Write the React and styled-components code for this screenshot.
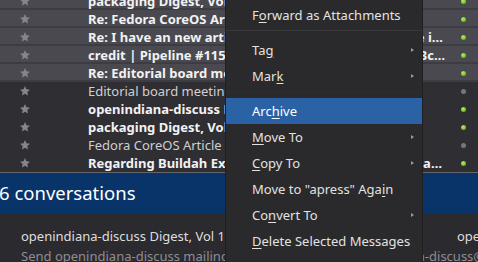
import React from 'react';
import styled, { createGlobalStyle } from 'styled-components';

const GlobalStyle = createGlobalStyle`
  html, body {
    margin: 0;
    padding: 0;
    background: #2b2a2f;
  }
  body {
    font-family: 'Noto Sans', 'Open Sans', sans-serif;
  }
`;

const Screen = styled.div`
  position: relative;
  width: 478px;
  height: 262px;
  overflow: hidden;
  background: #2b2a2f;
  font-family: 'Noto Sans', 'Open Sans', sans-serif;
`;

const MessageList = styled.div`
  display: flex;
  flex-direction: column;
  margin-top: -8px;
`;

const Row = styled.div`
  display: grid;
  grid-template-columns: 48px 40px 359px 1fr;
  align-items: center;
  height: 18px;
  box-sizing: border-box;
  background: ${p => (p.$selected ? '#4a4950' : '#2f2e33')};
  border-bottom: 2px solid ${p => (p.$selected ? '#3d3c42' : '#2f2e33')};
`;

const StarCell = styled.div`
  display: flex;
  justify-content: center;
  padding-left: 1px;
  padding-top: 2px;
`;

const Subject = styled.div`
  font-size: 13px;
  line-height: 18px;
  padding-top: 1px;
  white-space: nowrap;
  overflow: hidden;
  text-overflow: ellipsis;
  font-weight: ${p => (p.$unread ? 700 : 400)};
  color: ${p => (p.$unread ? '#f2f2f2' : '#cfcfd2')};
`;

const DotCell = styled.div`
  display: flex;
  justify-content: center;
  padding-left: 1px;
  padding-top: 2px;
`;

const Dot = styled.span`
  width: 5px;
  height: 5px;
  border-radius: 50%;
  background: ${p =>
    p.$on
      ? 'radial-gradient(circle at 40% 35%, #b6ef5a 0%, #78c41c 60%, #4f8f10 100%)'
      : '#77767b'};
`;

const CountBar = styled.div`
  height: 42px;
  box-sizing: border-box;
  border-top: 1px solid #66656b;
  background: #08346a;
  display: flex;
  align-items: center;
  color: #ffffff;
  font-size: 18.5px;
  white-space: nowrap;
  overflow: hidden;
`;

const CountText = styled.span`
  margin-left: -1px;
  padding-bottom: 2px;
`;

const Preview = styled.div`
  padding: 12px 0 0 21px;
  display: flex;
  flex-direction: column;
`;

const PreviewLine = styled.div`
  display: flex;
  font-size: 13px;
  line-height: 20px;
  white-space: nowrap;
  color: ${p => (p.$muted ? '#8e8d93' : '#dededf')};
`;

const PreviewSide = styled.span`
  margin-left: auto;
  width: 21px;
  overflow: hidden;
`;

const Menu = styled.div`
  position: absolute;
  left: 226px;
  top: -4px;
  width: 196px;
  height: 280px;
  background: #2a2a2c;
  box-shadow: -1px 0 0 #1f1f21, 1px 0 0 #1f1f21;
  padding-top: 6px;
  box-sizing: border-box;
  display: flex;
  flex-direction: column;
`;

const MenuItem = styled.div`
  display: flex;
  align-items: center;
  height: 26px;
  flex: none;
  padding: 0 8px 0 26px;
  font-size: 13px;
  color: ${p => (p.$active ? '#ffffff' : '#e2e2e2')};
  background: ${p => (p.$active ? '#2b62a6' : 'transparent')};
  white-space: nowrap;
`;

const Label = styled.span`
  flex: 1;
  u {
    text-decoration: underline;
    text-underline-offset: 2px;
  }
`;

const SubArrow = styled.span`
  width: 0;
  height: 0;
  border-top: 2px solid transparent;
  border-bottom: 2px solid transparent;
  border-left: 3px solid #9a9a9c;
`;

const Separator = styled.div`
  flex: none;
  height: 1px;
  margin: 2px 0 6px;
  background: ${p => (p.$faint ? '#2d2d2f' : '#38383b')};
`;

const Star = () => (
  <svg width="12" height="12" viewBox="0 0 24 24">
    <path
      d="M12 2l2.9 6.6 7.1.7-5.4 4.8 1.6 7.1L12 17.5l-6.2 3.7 1.6-7.1L2 9.3l7.1-.7z"
      fill="#86858b"
    />
  </svg>
);

const messages = [
  { subject: 'packaging Digest, Vol 172, Issue 9', unread: true, selected: true, on: true },
  { subject: 'Re: Fedora CoreOS Article', unread: true, selected: true, on: true },
  { subject: 'Re: I have an new article idea for a Fedora Magazine issue', unread: true, selected: true, on: true },
  { subject: 'credit | Pipeline #1152409 has failed for master | 4f3c9d21', unread: true, selected: true, on: true },
  { subject: 'Re: Editorial board meeting', unread: true, selected: true, on: true },
  { subject: 'Editorial board meeting', unread: false, selected: false, on: false },
  { subject: 'openindiana-discuss Digest, Vol 101, Issue 2', unread: true, selected: false, on: true },
  { subject: 'packaging Digest, Vol 172, Issue 8', unread: true, selected: false, on: true },
  { subject: 'Fedora CoreOS Article ideas', unread: false, selected: false, on: false },
  { subject: 'Regarding Buildah Examples for a Fedora Magazine and Podman', unread: true, selected: false, on: true },
];

const items = [
  { label: <>F<u>o</u>rward as Attachments</> },
  { sep: true },
  { label: <>Ta<u>g</u></>, sub: true },
  { label: <>Mar<u>k</u></>, sub: true },
  { sep: true, faint: true },
  { label: <>Arc<u>h</u>ive</>, active: true },
  { label: <><u>M</u>ove To</>, sub: true },
  { label: <><u>C</u>opy To</>, sub: true },
  { label: <>Move to "apress" Aga<u>i</u>n</> },
  { label: <>Co<u>n</u>vert To</>, sub: true },
  { label: <><u>D</u>elete Selected Messages</> },
];

export default function App() {
  return (
    <Screen>
      <GlobalStyle />
      <MessageList>
        {messages.map((m, i) => (
          <Row key={i} $selected={m.selected}>
            <StarCell><Star /></StarCell>
            <div />
            <Subject $unread={m.unread}>{m.subject}</Subject>
            <DotCell><Dot $on={m.on} /></DotCell>
          </Row>
        ))}
      </MessageList>
      <CountBar>
        <CountText>6 conversations</CountText>
      </CountBar>
      <Preview>
        <PreviewLine>
          <span>openindiana-discuss Digest, Vol 101, Issue 2</span>
          <PreviewSide>openindiana</PreviewSide>
        </PreviewLine>
        <PreviewLine $muted>
          Send openindiana-discuss mailing list submissions to openindiana-discuss@openindiana.org
        </PreviewLine>
      </Preview>
      <Menu>
        {items.map((it, i) =>
          it.sep ? (
            <Separator key={i} $faint={it.faint} />
          ) : (
            <MenuItem key={i} $active={it.active}>
              <Label>{it.label}</Label>
              {it.sub && <SubArrow />}
            </MenuItem>
          )
        )}
      </Menu>
    </Screen>
  );
}
